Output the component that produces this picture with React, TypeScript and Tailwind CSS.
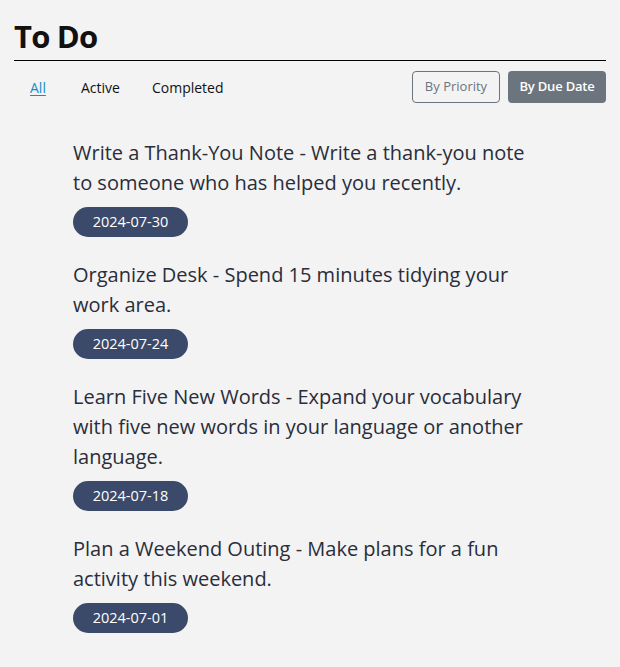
import React from 'react';

const todos = [
  {
    text: 'Write a Thank-You Note - Write a thank-you note to someone who has helped you recently.',
    due: '2024-07-30',
  },
  {
    text: 'Organize Desk - Spend 15 minutes tidying your work area.',
    due: '2024-07-24',
  },
  {
    text: 'Learn Five New Words - Expand your vocabulary with five new words in your language or another language.',
    due: '2024-07-18',
  },
  {
    text: 'Plan a Weekend Outing - Make plans for a fun activity this weekend.',
    due: '2024-07-01',
  },
];

export default function App() {
  return (
    <div
      className="min-h-screen bg-[#f3f3f3] text-[#111] px-[14px] pt-[14px]"
      style={{ fontFamily: "'Open Sans', 'Noto Sans', sans-serif" }}
    >
      {/* Header */}
      <h1 className="text-[31px] font-bold leading-[44px] tracking-[-0.8px] border-b border-black pb-[2px]">
        To Do
      </h1>

      {/* Filters + sort */}
      <div className="flex items-center justify-between mt-[10px]">
        <div className="flex items-center pl-[16px] text-[14px]">
          <a href="#" className="text-[#1a8cc4] underline underline-offset-2 w-[18px]">All</a>
          <span className="ml-[33px]">Active</span>
          <span className="ml-[32px]">Completed</span>
        </div>
        <div className="flex items-center gap-[8px] text-[13px]">
          <button className="h-[32px] w-[88px] rounded-[4px] border border-[#6c757d] text-[#6c757d]">
            By Priority
          </button>
          <button className="h-[32px] w-[98px] rounded-[4px] bg-[#6c757d] text-white font-semibold tracking-[-0.2px]">
            By Due Date
          </button>
        </div>
      </div>

      {/* List */}
      <ul className="mt-[35px] pl-[59px] flex flex-col gap-[23px]">
        {todos.map((t) => (
          <li key={t.due} className="w-[462px]">
            <p className="text-[20px] leading-[30px] text-[#2a2d3a]">{t.text}</p>
            <span className="mt-[9px] inline-flex items-center justify-center w-[115px] h-[30px] rounded-full bg-[#3b4a6b] text-white text-[14.5px]">
              {t.due}
            </span>
          </li>
        ))}
      </ul>
    </div>
  );
}
